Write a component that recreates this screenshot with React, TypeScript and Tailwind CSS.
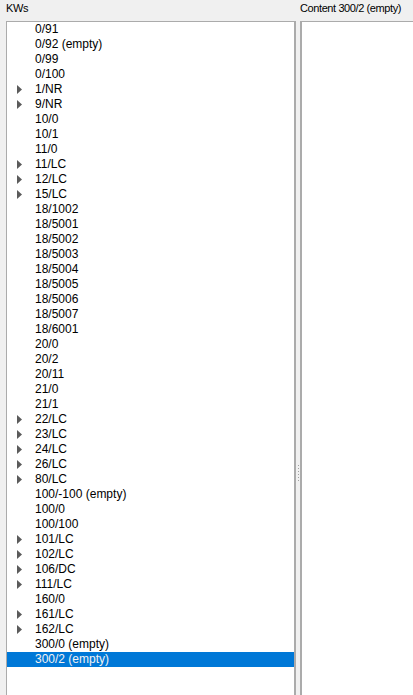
import React from "react";

type Row = { label: string; expandable?: boolean };

const rows: Row[] = [
  { label: "0/91" },
  { label: "0/92 (empty)" },
  { label: "0/99" },
  { label: "0/100" },
  { label: "1/NR", expandable: true },
  { label: "9/NR", expandable: true },
  { label: "10/0" },
  { label: "10/1" },
  { label: "11/0" },
  { label: "11/LC", expandable: true },
  { label: "12/LC", expandable: true },
  { label: "15/LC", expandable: true },
  { label: "18/1002" },
  { label: "18/5001" },
  { label: "18/5002" },
  { label: "18/5003" },
  { label: "18/5004" },
  { label: "18/5005" },
  { label: "18/5006" },
  { label: "18/5007" },
  { label: "18/6001" },
  { label: "20/0" },
  { label: "20/2" },
  { label: "20/11" },
  { label: "21/0" },
  { label: "21/1" },
  { label: "22/LC", expandable: true },
  { label: "23/LC", expandable: true },
  { label: "24/LC", expandable: true },
  { label: "26/LC", expandable: true },
  { label: "80/LC", expandable: true },
  { label: "100/-100 (empty)" },
  { label: "100/0" },
  { label: "100/100" },
  { label: "101/LC", expandable: true },
  { label: "102/LC", expandable: true },
  { label: "106/DC", expandable: true },
  { label: "111/LC", expandable: true },
  { label: "160/0" },
  { label: "161/LC", expandable: true },
  { label: "162/LC", expandable: true },
  { label: "300/0 (empty)" },
  { label: "300/2 (empty)" },
];

const Arrow = () => (
  <svg width="5" height="9" viewBox="0 0 5 9" className="block">
    <polygon points="0,0 5,4.5 0,9" fill="#5b5b5b" />
  </svg>
);

const App = () => {
  const selected = "300/2 (empty)";

  return (
    <div className="w-[413px] h-[695px] bg-[#f0f0f0] overflow-hidden flex font-['Liberation_Sans',Arial,sans-serif]">
      {/* Tree column */}
      <div className="w-[296px] pl-[6px] flex flex-col">
        <div className="h-[21px] pt-[1px] text-[11px] leading-[15px] tracking-[-0.4px] text-black">
          KWs
        </div>
        <div className="flex-1 bg-white border-t border-l border-r-2 border-[#ababab]">
          {rows.map((row) => {
            const isSel = row.label === selected;
            return (
              <div
                key={row.label}
                className={
                  "h-[15px] flex items-center text-[12px] leading-[15px] " +
                  (isSel ? "bg-[#0078d7] text-[#f2f2f2]" : "text-black")
                }
              >
                <div className="w-[28px] pl-[10px] flex items-center">
                  {row.expandable && <Arrow />}
                </div>
                <span className="whitespace-nowrap">{row.label}</span>
              </div>
            );
          })}
        </div>
      </div>

      {/* Splitter */}
      <div className="w-[4px] pt-[465px] flex flex-col items-center gap-[2px]">
        {[0, 1, 2, 3, 4, 5].map((i) => (
          <div key={i} className="w-[1px] h-[1px] bg-[#a0a0a0]" />
        ))}
      </div>

      {/* Content column */}
      <div className="flex-1 flex flex-col">
        <div className="h-[21px] pt-[1px] text-[11px] leading-[15px] tracking-[-0.4px] text-black whitespace-nowrap">
          Content 300/2 (empty)
        </div>
        <div className="flex-1 bg-white border-t border-l-2 border-[#ababab]" />
      </div>
    </div>
  );
};

export default App;
